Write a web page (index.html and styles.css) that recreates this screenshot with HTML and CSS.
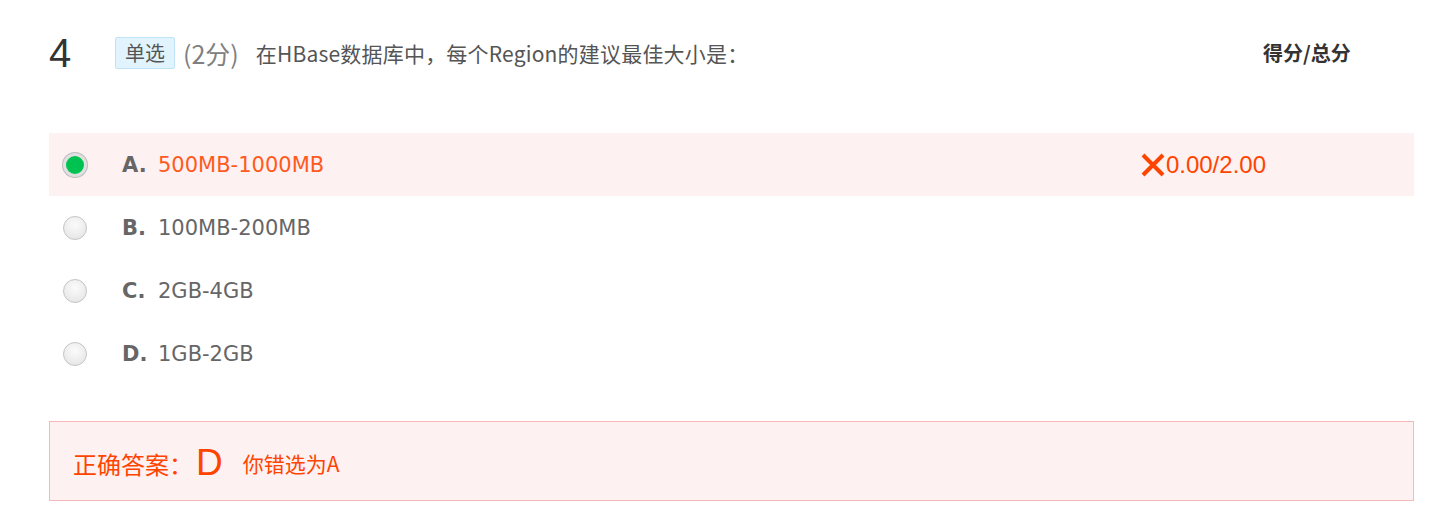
FILE: index.html
```html
<!DOCTYPE html>
<html lang="zh">
<head>
<meta charset="utf-8">
<link rel="stylesheet" href="styles.css">
</head>
<body>
<div class="question">
  <div class="q-head">
    <div class="q-num">4</div>
    <div class="q-title">
      <span class="tag">单选</span>
      <span class="score">(2分)</span>
      <span class="q-text">在HBase数据库中，每个Region的建议最佳大小是：</span>
    </div>
    <div class="q-total">得分/总分</div>
  </div>
  <ul class="options">
    <li class="option wrong">
      <span class="radio checked"></span>
      <span class="letter">A.</span>
      <span class="opt-text">500MB-1000MB</span>
      <span class="result"><svg class="cross" viewBox="0 0 26 26" width="26" height="26"><path d="M3 3 L23 23 M23 3 L3 23" stroke="#ff4400" stroke-width="4" stroke-linecap="butt"/></svg>0.00/2.00</span>
    </li>
    <li class="option">
      <span class="radio"></span>
      <span class="letter">B.</span>
      <span class="opt-text">100MB-200MB</span>
    </li>
    <li class="option">
      <span class="radio"></span>
      <span class="letter">C.</span>
      <span class="opt-text">2GB-4GB</span>
    </li>
    <li class="option">
      <span class="radio"></span>
      <span class="letter">D.</span>
      <span class="opt-text">1GB-2GB</span>
    </li>
  </ul>
  <div class="answer">
    <span class="ans-label">正确答案：</span>
    <span class="ans-key">D</span>
    <span class="ans-note">你错选为A</span>
  </div>
</div>
</body>
</html>
```
FILE: styles.css
```css
* { box-sizing: border-box; }
body {
  margin: 0;
  background: #fff;
  font-family: "Liberation Sans", "Noto Sans CJK SC", sans-serif;
  color: #333;
}
.question {
  padding: 33px 30px 0 49px;
  width: 1444px;
}
.q-head {
  display: flex;
  align-items: flex-start;
  height: 100px;
}
.q-num {
  width: 66px;
  font-size: 40px;
  line-height: 40px;
  color: #333;
}
.q-title {
  flex: 1;
  display: flex;
  align-items: center;
  margin-top: 2px;
}
.tag {
  display: inline-block;
  height: 32px;
  line-height: 30px;
  padding: 0 9px;
  font-size: 20px;
  color: #555;
  background: #e1f4fd;
  border: 1px solid #bfe3f7;
  border-radius: 2px;
  font-family: "Noto Sans CJK SC", sans-serif;
}
.score {
  margin-left: 8px;
  font-size: 25px;
  color: #808080;
  font-family: "Noto Sans CJK SC", sans-serif;
}
.q-text {
  margin-left: 17px;
  font-size: 21px;
  letter-spacing: 0.2px;
  color: #555;
  font-family: "Noto Sans CJK SC", sans-serif;
}
.q-total {
  width: 120px;
  margin-right: 31px;
  margin-top: 5px;
  font-size: 20px;
  font-weight: bold;
  color: #333;
  font-family: "Noto Sans CJK SC", sans-serif;
}
.options {
  list-style: none;
  margin: 0;
  padding: 0;
  width: 1365px;
}
.option {
  display: flex;
  align-items: center;
  height: 63px;
  padding-left: 14px;
  font-family: "DejaVu Sans", sans-serif;
  font-size: 21px;
  color: #666;
}
.option.wrong { background: #fef1f1; }
.radio {
  width: 24px;
  height: 24px;
  border-radius: 50%;
  border: 1px solid #c4c4c4;
  background: radial-gradient(circle at 50% 35%, #fbfbfb, #e2e2e2);
  margin-right: 35px;
  flex: none;
}
.radio.checked {
  background: #00c251;
  border: 3px solid #e0e0e0;
  box-shadow: 0 0 0 1px #bdbdbd;
}
.letter {
  font-weight: bold;
  color: #666;
  width: 36px;
}
.opt-text { color: #666; }
.wrong .opt-text { color: #ff5a1e; }
.result {
  margin-left: auto;
  margin-right: 148px;
  display: flex;
  align-items: center;
  font-family: "Liberation Sans", sans-serif;
  font-size: 24px;
  color: #ff4400;
}
.cross { display: block; }
.answer {
  margin-top: 36px;
  width: 1365px;
  height: 80px;
  background: #fef1f1;
  border: 1px solid #f6b8b8;
  display: flex;
  align-items: center;
  padding-left: 23px;
  padding-top: 4px;
  color: #ff4400;
  font-family: "Noto Sans CJK SC", sans-serif;
}
.ans-label { font-size: 24px; }
.ans-key {
  font-family: "Liberation Sans", sans-serif;
  font-size: 37px;
  margin-left: 3px;
  margin-right: 20px;
}
.ans-note { font-size: 21px; }
```
